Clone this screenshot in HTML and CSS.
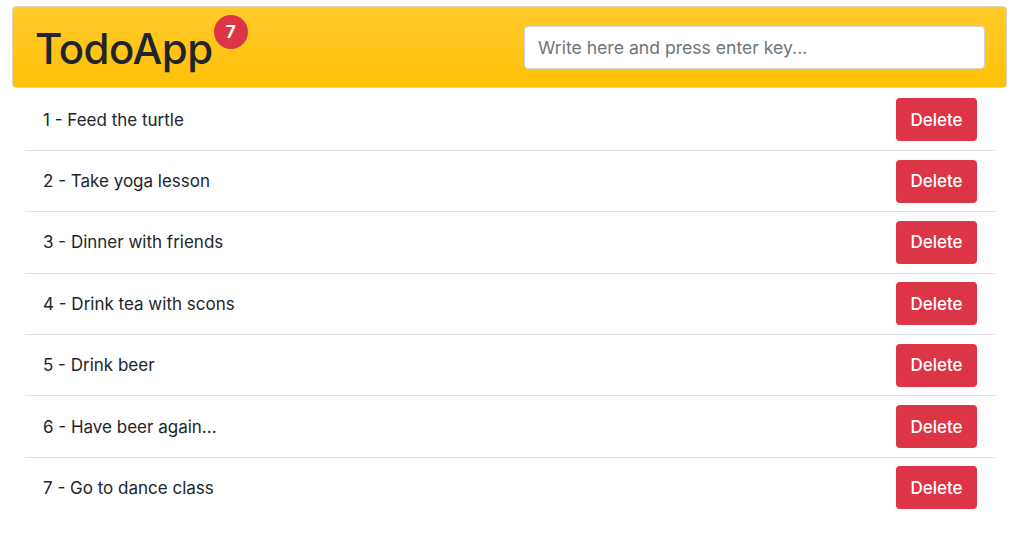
FILE: index.html
```html
<!DOCTYPE html>
<html>
<head>
<meta charset="utf-8">
<link rel="stylesheet" href="styles.css">
</head>
<body>
<div class="app">
  <header class="header">
    <h1 class="title">TodoApp<span class="badge">7</span></h1>
    <input class="new-todo" type="text" placeholder="Write here and press enter key...">
  </header>
  <ul class="list">
    <li class="item"><span>1 - Feed the turtle</span><button class="btn">Delete</button></li>
    <li class="item"><span>2 - Take yoga lesson</span><button class="btn">Delete</button></li>
    <li class="item"><span>3 - Dinner with friends</span><button class="btn">Delete</button></li>
    <li class="item"><span>4 - Drink tea with scons</span><button class="btn">Delete</button></li>
    <li class="item"><span>5 - Drink beer</span><button class="btn">Delete</button></li>
    <li class="item"><span>6 - Have beer again...</span><button class="btn">Delete</button></li>
    <li class="item"><span>7 - Go to dance class</span><button class="btn">Delete</button></li>
  </ul>
</div>
</body>
</html>
```
FILE: styles.css
```css
* { box-sizing: border-box; }
html, body { margin: 0; padding: 0; background: #fff; }
body {
  font-family: Inter, "Liberation Sans", sans-serif;
  color: #212529;
}
.app {
  padding: 6px 8px 0 12px;
}
.header {
  height: 82px;
  border: 1px solid #dfd6b3;
  border-radius: 4px;
  background: linear-gradient(#ffca2c, #ffc107);
  display: flex;
  align-items: center;
  justify-content: space-between;
  padding: 0 21px 0 22px;
}
.title {
  margin: 0;
  font-size: 42px;
  font-weight: 500;
  letter-spacing: -0.5px;
  position: relative;
  line-height: 1;
  padding-top: 4px;
}
.badge {
  position: absolute;
  top: -9px;
  right: -35px;
  width: 34px;
  height: 34px;
  border-radius: 50%;
  background: #dc3545;
  color: #fff;
  font-size: 17px;
  font-weight: 700;
  display: flex;
  align-items: center;
  justify-content: center;
  letter-spacing: 0;
}
.new-todo {
  width: 461px;
  height: 43px;
  border: 1px solid #ced4da;
  border-radius: 4px;
  padding: 0 13px;
  font-family: inherit;
  font-size: 17.6px;
  color: #495057;
  background: #fff;
  outline: none;
}
.new-todo::placeholder { color: #6c757d; }
.list {
  list-style: none;
  margin: 1.5px 0 0 13px;
  padding: 0;
  width: 970px;
}
.item {
  display: flex;
  align-items: center;
  justify-content: space-between;
  padding: 8.7px 18px;
  border-bottom: 1px solid #dee2e6;
  font-size: 17px;
}
.item:last-child { border-bottom: none; }
.btn {
  width: 81px;
  height: 43px;
  border: none;
  border-radius: 4px;
  background: #dc3545;
  color: #fff;
  font-family: inherit;
  font-size: 17px;
  font-weight: 500;
  cursor: pointer;
}
```
